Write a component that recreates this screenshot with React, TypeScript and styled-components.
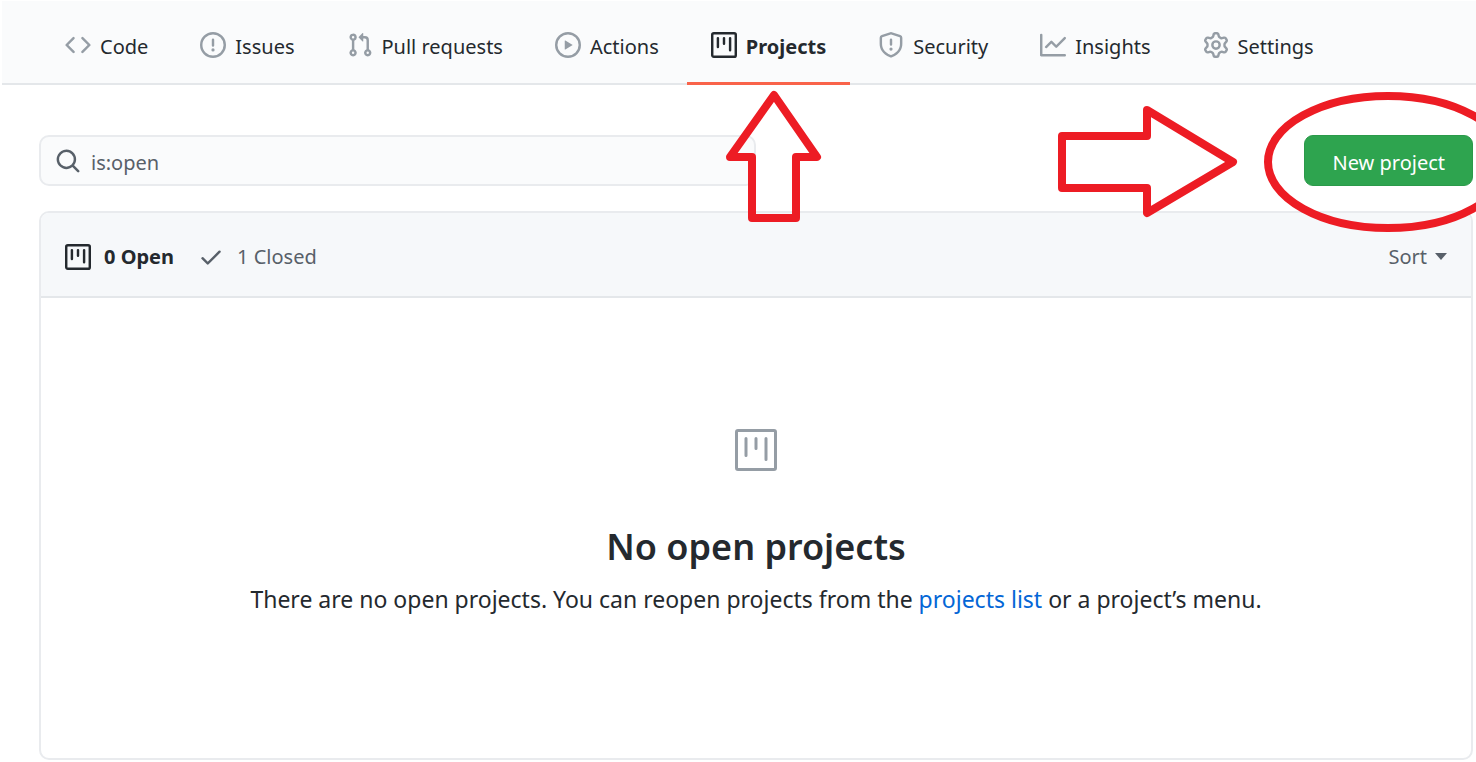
import React from "react";
import styled, { createGlobalStyle } from "styled-components";

const GlobalStyle = createGlobalStyle`
  *, *::before, *::after { box-sizing: border-box; }
  body {
    margin: 0;
    background: #ffffff;
    color: #24292e;
    font-family: "Noto Sans", "Open Sans", sans-serif;
    font-size: 20px;
    line-height: 28px;
  }
`;

const Page = styled.div`
  position: relative;
  overflow: hidden;
  padding: 1px 0 2px 2px;
`;

const Nav = styled.nav`
  display: flex;
  gap: 4px;
  padding-left: 39px;
  background: #fafbfc;
  border-bottom: 2px solid #e4e7ea;
`;

const Tab = styled.a<{ $active?: boolean }>`
  display: flex;
  align-items: center;
  gap: 9px;
  height: 84px;
  margin-bottom: -2px;
  padding: 10px 24px 0;
  border-bottom: 3px solid ${(p) => (p.$active ? "#f9634a" : "transparent")};
  color: #24292e;
  font-weight: ${(p) => (p.$active ? 700 : 400)};
  text-decoration: none;
  white-space: nowrap;

  svg {
    margin-bottom: 4px;
    color: ${(p) => (p.$active ? "#24292e" : "#959da5")};
  }
`;

const Glyph = styled.svg`
  flex: none;
  fill: currentColor;
`;

const Main = styled.main`
  padding: 50px 3px 0 37px;
`;

const Toolbar = styled.div`
  display: flex;
  align-items: center;
  justify-content: space-between;
  margin-bottom: 25px;
`;

const Search = styled.label`
  display: flex;
  align-items: center;
  gap: 10px;
  width: 50%;
  height: 51px;
  padding: 0 14px;
  border: 2px solid #e9ebee;
  border-radius: 10px;
  background: #fafbfc;
  color: #586069;
`;

const SearchInput = styled.input`
  flex: 1;
  min-width: 0;
  padding: 4px 0 0;
  border: 0;
  outline: 0;
  background: transparent;
  color: #586069;
  font: inherit;
`;

const PrimaryButton = styled.button`
  height: 51px;
  padding: 4px 27px 0;
  border: 1px solid #2b9a4a;
  border-radius: 9px;
  background: #2ea44f;
  color: #ffffff;
  font: inherit;
`;

const Card = styled.section`
  border: 2px solid #e9ebee;
  border-radius: 10px;
  overflow: hidden;
`;

const CardHeader = styled.header`
  display: flex;
  align-items: center;
  gap: 24px;
  height: 85px;
  padding: 4px 24px 0;
  background: #f6f8fa;
  border-bottom: 2px solid #e4e7ea;
`;

const StateLink = styled.a<{ $selected?: boolean }>`
  display: flex;
  align-items: center;
  gap: 13px;
  color: ${(p) => (p.$selected ? "#24292e" : "#586069")};
  font-weight: ${(p) => (p.$selected ? 700 : 400)};
  text-decoration: none;
`;

const SortButton = styled.button`
  display: flex;
  align-items: center;
  gap: 8px;
  margin-left: auto;
  padding: 0;
  border: 0;
  background: none;
  color: #586069;
  font: inherit;
`;

const Empty = styled.div`
  display: flex;
  flex-direction: column;
  align-items: center;
  padding: 131px 24px 143px;
  color: #959da5;
`;

const Title = styled.h3`
  margin: 52px 0 12px;
  color: #24292e;
  font-size: 36px;
  line-height: 48px;
  font-weight: 600;
`;

const Message = styled.p`
  margin: 0;
  color: #24292e;
  font-size: 23px;
  line-height: 32px;
`;

const TextLink = styled.a`
  color: #0366d6;
  text-decoration: none;
`;

const UpArrow = styled.svg`
  position: absolute;
  top: 86px;
  left: 722px;
`;

const Callout = styled.svg`
  position: absolute;
  top: 86px;
  right: -36px;
  pointer-events: none;
`;

const paths = {
  code: "M4.72 3.22a.75.75 0 011.06 1.06L2.06 8l3.72 3.72a.75.75 0 11-1.06 1.06L.47 8.53a.75.75 0 010-1.06l4.25-4.25zm6.56 0a.75.75 0 10-1.06 1.06L13.94 8l-3.72 3.72a.75.75 0 101.06 1.06l4.25-4.25a.75.75 0 000-1.06l-4.25-4.25z",
  issue: "M8 1.5a6.5 6.5 0 100 13 6.5 6.5 0 000-13zM0 8a8 8 0 1116 0A8 8 0 010 8zm9 3a1 1 0 11-2 0 1 1 0 012 0zm-.25-6.25a.75.75 0 00-1.5 0v3.5a.75.75 0 001.5 0v-3.5z",
  pull: "M7.177 3.073L9.573.677A.25.25 0 0110 .854v4.792a.25.25 0 01-.427.177L7.177 3.427a.25.25 0 010-.354zM3.75 2.5a.75.75 0 100 1.5.75.75 0 000-1.5zm-2.25.75a2.25 2.25 0 113 2.122v5.256a2.251 2.251 0 11-1.5 0V5.372A2.25 2.25 0 011.5 3.25zM11 2.5h-1V4h1a1 1 0 011 1v5.628a2.251 2.251 0 101.5 0V5A2.5 2.5 0 0011 2.5zm1 10.25a.75.75 0 111.5 0 .75.75 0 01-1.5 0zM3.75 12a.75.75 0 100 1.5.75.75 0 000-1.5z",
  play: "M1.5 8a6.5 6.5 0 1113 0 6.5 6.5 0 01-13 0zM8 0a8 8 0 100 16A8 8 0 008 0zM6.379 5.227A.25.25 0 006 5.442v5.117a.25.25 0 00.379.214l4.264-2.559a.25.25 0 000-.428L6.379 5.227z",
  project: "M1.75 0A1.75 1.75 0 000 1.75v12.5C0 15.216.784 16 1.75 16h12.5A1.75 1.75 0 0016 14.25V1.75A1.75 1.75 0 0014.25 0H1.75zM1.5 1.75a.25.25 0 01.25-.25h12.5a.25.25 0 01.25.25v12.5a.25.25 0 01-.25.25H1.75a.25.25 0 01-.25-.25V1.75zM11.75 3a.75.75 0 00-.75.75v7.5a.75.75 0 001.5 0v-7.5a.75.75 0 00-.75-.75zm-8.25.75a.75.75 0 011.5 0v5.5a.75.75 0 01-1.5 0v-5.5zM8 3a.75.75 0 00-.75.75v3.5a.75.75 0 001.5 0v-3.5A.75.75 0 008 3z",
  shield: "M7.467.133a1.75 1.75 0 011.066 0l5.25 1.68A1.75 1.75 0 0115 3.48V7c0 1.566-.32 3.182-1.303 4.682-.983 1.498-2.585 2.813-5.032 3.855a1.7 1.7 0 01-1.33 0c-2.447-1.042-4.049-2.357-5.032-3.855C1.32 10.182 1 8.566 1 7V3.48a1.75 1.75 0 011.217-1.667l5.25-1.68zm.61 1.429a.25.25 0 00-.153 0l-5.25 1.68a.25.25 0 00-.174.238V7c0 1.358.275 2.666 1.057 3.86.784 1.194 2.121 2.34 4.366 3.297a.2.2 0 00.154 0c2.245-.956 3.582-2.104 4.366-3.298C13.225 9.666 13.5 8.36 13.5 7V3.48a.25.25 0 00-.174-.237l-5.25-1.68zM9 10.5a1 1 0 11-2 0 1 1 0 012 0zm-.25-5.75a.75.75 0 10-1.5 0v3a.75.75 0 001.5 0v-3z",
  graph: "M1.5 1.75a.75.75 0 00-1.5 0v12.5c0 .414.336.75.75.75h14.5a.75.75 0 000-1.5H1.5V1.75zm14.28 2.53a.75.75 0 00-1.06-1.06L10 7.94 7.53 5.47a.75.75 0 00-1.06 0L3.22 8.72a.75.75 0 001.06 1.06L7 7.06l2.47 2.47a.75.75 0 001.06 0l5.25-5.25z",
  gear: "M7.429 1.525a6.593 6.593 0 011.142 0c.036.003.108.036.137.146l.289 1.105c.147.56.55.967.997 1.189.174.086.341.183.501.29.417.278.97.423 1.53.27l1.102-.303c.11-.03.175.016.195.046.219.31.41.641.573.989.014.031.022.11-.059.19l-.815.806c-.411.406-.562.957-.53 1.456a4.588 4.588 0 010 .582c-.032.499.119 1.05.53 1.456l.815.806c.08.08.073.159.059.19a6.494 6.494 0 01-.573.99c-.02.029-.086.074-.195.045l-1.103-.303c-.559-.153-1.112-.008-1.529.27-.16.107-.327.204-.5.29-.449.222-.851.628-.998 1.189l-.289 1.105c-.029.11-.101.143-.137.146a6.613 6.613 0 01-1.142 0c-.036-.003-.108-.037-.137-.146l-.289-1.105c-.147-.56-.55-.967-.997-1.189a4.502 4.502 0 01-.501-.29c-.417-.278-.97-.423-1.53-.27l-1.102.303c-.11.03-.175-.016-.195-.046a6.492 6.492 0 01-.573-.989c-.014-.031-.022-.11.059-.19l.815-.806c.411-.406.562-.957.53-1.456a4.587 4.587 0 010-.582c.032-.499-.119-1.05-.53-1.456l-.815-.806c-.08-.08-.073-.159-.059-.19a6.44 6.44 0 01.573-.99c.02-.029.086-.075.195-.045l1.103.303c.559.153 1.112.008 1.529-.27.16-.107.327-.204.5-.29.449-.222.851-.628.998-1.189l.289-1.105c.029-.11.101-.143.137-.146zM8 0c-.236 0-.47.01-.701.03-.743.065-1.29.615-1.458 1.261l-.29 1.106c-.017.066-.078.158-.211.224a5.994 5.994 0 00-.668.386c-.123.082-.233.09-.3.071L3.27 2.776c-.644-.177-1.392.02-1.82.63a7.977 7.977 0 00-.704 1.217c-.315.675-.111 1.422.363 1.891l.815.806c.05.048.098.147.088.294a6.084 6.084 0 000 .772c.01.147-.038.246-.088.294l-.815.806c-.474.469-.678 1.216-.363 1.891.2.428.436.835.704 1.218.428.609 1.176.806 1.82.63l1.103-.303c.066-.019.176-.011.299.071.213.143.436.272.668.386.133.066.194.158.212.224l.289 1.106c.169.646.715 1.196 1.458 1.26a8.094 8.094 0 001.402 0c.743-.064 1.29-.614 1.458-1.26l.29-1.106c.017-.066.078-.158.211-.224a5.98 5.98 0 00.668-.386c.123-.082.233-.09.3-.071l1.102.302c.644.177 1.392-.02 1.82-.63.268-.382.505-.789.704-1.217.315-.675.111-1.422-.364-1.891l-.814-.806c-.05-.048-.098-.147-.088-.294a6.1 6.1 0 000-.772c-.01-.147.039-.246.088-.294l.814-.806c.475-.469.679-1.216.364-1.891a7.992 7.992 0 00-.704-1.218c-.428-.609-1.176-.806-1.82-.63l-1.103.303c-.066.019-.176.011-.299-.071a5.991 5.991 0 00-.668-.386c-.133-.066-.194-.158-.212-.224L10.16 1.29C9.99.645 9.444.095 8.701.031A8.094 8.094 0 008 0zm1.5 8a1.5 1.5 0 11-3 0 1.5 1.5 0 013 0zM11 8a3 3 0 11-6 0 3 3 0 016 0z",
  search: "M11.5 7a4.499 4.499 0 11-8.998 0A4.499 4.499 0 0111.5 7zm-.82 4.74a6 6 0 111.06-1.06l3.04 3.04a.75.75 0 11-1.06 1.06l-3.04-3.04z",
  check: "M13.78 4.22a.75.75 0 010 1.06l-7.25 7.25a.75.75 0 01-1.06 0L2.22 9.28a.75.75 0 011.06-1.06L6 10.94l6.72-6.72a.75.75 0 011.06 0z",
};

type IconName = keyof typeof paths;

function Icon({ name, size = 26 }: { name: IconName; size?: number }) {
  return (
    <Glyph width={size} height={size} viewBox="0 0 16 16" aria-hidden="true">
      <path fillRule="evenodd" d={paths[name]} />
    </Glyph>
  );
}

const tabs: { label: string; icon: IconName; active?: boolean }[] = [
  { label: "Code", icon: "code" },
  { label: "Issues", icon: "issue" },
  { label: "Pull requests", icon: "pull" },
  { label: "Actions", icon: "play" },
  { label: "Projects", icon: "project", active: true },
  { label: "Security", icon: "shield" },
  { label: "Insights", icon: "graph" },
  { label: "Settings", icon: "gear" },
];

export default function App() {
  return (
    <Page>
      <GlobalStyle />
      <Nav aria-label="Repository">
        {tabs.map((t) => (
          <Tab key={t.label} href="#" $active={t.active} aria-current={t.active ? "page" : undefined}>
            <Icon name={t.icon} />
            <span>{t.label}</span>
          </Tab>
        ))}
      </Nav>
      <Main>
        <Toolbar>
          <Search>
            <Icon name="search" />
            <SearchInput type="text" aria-label="Search all projects" defaultValue="is:open" />
          </Search>
          <PrimaryButton type="button">New project</PrimaryButton>
        </Toolbar>
        <Card>
          <CardHeader>
            <StateLink href="#" $selected>
              <Icon name="project" />
              <span>0 Open</span>
            </StateLink>
            <StateLink href="#">
              <Icon name="check" />
              <span>1 Closed</span>
            </StateLink>
            <SortButton type="button">
              Sort
              <svg width="12" height="7" viewBox="0 0 12 7" aria-hidden="true">
                <path d="M0 0h12L6 7z" fill="currentColor" />
              </svg>
            </SortButton>
          </CardHeader>
          <Empty>
            <svg width="42" height="42" viewBox="0 0 42 42" fill="none" stroke="currentColor" strokeWidth="3" aria-hidden="true">
              <rect x="1.5" y="1.5" width="39" height="39" rx="1.5" />
              <path d="M11 9.5v17M21 9.5v10M31 9.5v21" strokeLinecap="round" />
            </svg>
            <Title>No open projects</Title>
            <Message>
              There are no open projects. You can reopen projects from the <TextLink href="#">projects list</TextLink> or a project’s menu.
            </Message>
          </Empty>
        </Card>
      </Main>
      <UpArrow width="104" height="142" viewBox="722 86 104 142" aria-hidden="true">
        <path
          d="M774 95 817 157H796V218H752V157H730z"
          fill="none"
          stroke="#ed1c24"
          strokeWidth="8"
          strokeLinejoin="round"
        />
      </UpArrow>
      <Callout width="462" height="152" viewBox="1050 86 462 152" aria-hidden="true">
        <g fill="none" stroke="#ed1c24" strokeWidth="8" strokeLinejoin="round">
          <path d="M1062 136H1147V110L1233 162 1147 213V188H1062z" />
          <ellipse cx="1388" cy="162" rx="120" ry="66" />
        </g>
      </Callout>
    </Page>
  );
}
